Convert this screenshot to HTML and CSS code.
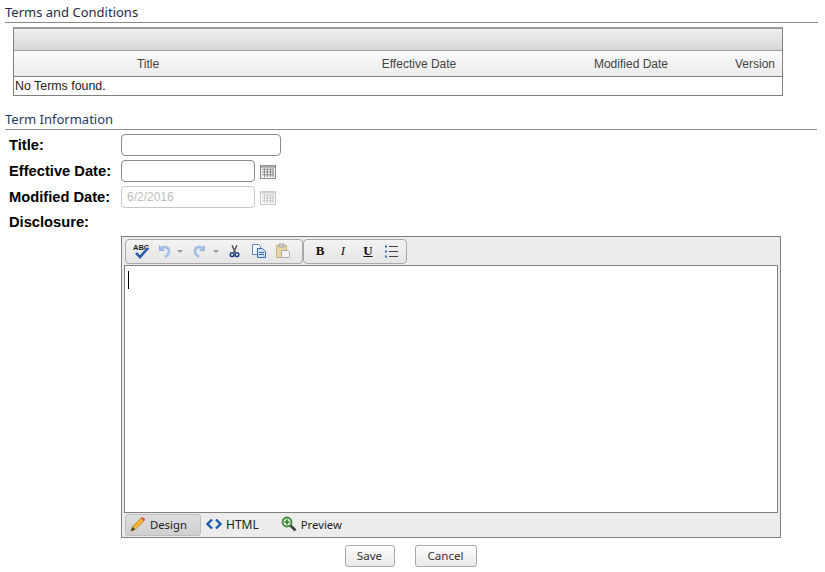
FILE: index.html
```html
<!DOCTYPE html>
<html lang="en">
<head>
<meta charset="utf-8">
<title>Terms and Conditions</title>
<link rel="stylesheet" href="styles.css">
</head>
<body>
<svg class="defs" width="0" height="0" aria-hidden="true">
  <symbol id="cal" viewBox="0 0 16 15" preserveAspectRatio="none">
    <rect x="0.5" y="0.5" width="15" height="14" fill="#f2f2f2" stroke="#8a8a8a"/>
    <rect x="1" y="1" width="14" height="2" fill="#a8a8a8"/>
    <path d="M2 4.500h12M2 7.500h12M2 10.500h12M4.500 4v9M7.500 4v9M10.500 4v9M13 4v9" stroke="#8c8c8c" fill="none"/>
  </symbol>
</svg>
<section class="section">
  <h2 class="heading">Terms and Conditions</h2>
  <div class="grid">
    <div class="grid-top"></div>
    <div class="grid-head">
      <span class="col-title">Title</span>
      <span class="col-eff">Effective Date</span>
      <span class="col-mod">Modified Date</span>
      <span class="col-ver">Version</span>
    </div>
    <div class="grid-empty">No Terms found.</div>
  </div>
</section>
<section class="section section-info">
  <h2 class="heading heading-info">Term Information</h2>
  <div class="form">
    <div class="row">
      <label class="label">Title:</label>
      <input class="input input-wide" type="text">
    </div>
    <div class="row">
      <label class="label">Effective Date:</label>
      <input class="input" type="text">
      <svg class="cal-icon"><use href="#cal"/></svg>
    </div>
    <div class="row">
      <label class="label">Modified Date:</label>
      <input class="input input-disabled" type="text" value="6/2/2016" disabled>
      <svg class="cal-icon cal-disabled"><use href="#cal"/></svg>
    </div>
    <div class="row row-disc">
      <label class="label">Disclosure:</label>
    </div>
  </div>
  <div class="editor">
    <div class="toolbar">
      <div class="tool-group group-a">
        <svg class="ti" viewBox="0 0 18 16"><text x="1" y="7" class="abc">ABC</text><path d="M4 10l4 4 8-9" fill="none" stroke="#2f5fa8" stroke-width="2.600"/></svg>
        <svg class="ti t-dim" viewBox="0 0 16 16"><path d="M3 2v6h6" fill="#8fb0dc"/><path d="M4 7c2-4 9-4 9 1 0 3-2 5-4 6" fill="none" stroke="#a3bfe4" stroke-width="2.600"/></svg>
        <span class="caret"></span>
        <svg class="ti t-dim t-redo" viewBox="0 0 16 16"><path d="M13 2v6H7" fill="#8fb0dc"/><path d="M12 7C10 3 3 3 3 8c0 3 2 5 4 6" fill="none" stroke="#a3bfe4" stroke-width="2.600"/></svg>
        <span class="caret"></span>
        <svg class="ti t-cut" viewBox="0 0 16 16"><path d="M5 1l4 9M11 1L7 10" stroke="#555" stroke-width="1.800" fill="none"/><circle cx="5" cy="12.500" r="2.300" fill="none" stroke="#24418f" stroke-width="1.800"/><circle cx="11" cy="12.500" r="2.300" fill="none" stroke="#24418f" stroke-width="1.800"/></svg>
        <svg class="ti t-copy" viewBox="0 0 16 16"><path d="M1.500 1.500h6l2 2v8h-8z" fill="#fff" stroke="#5b84c4"/><path d="M6.500 5.500h5l3 3v6h-8z" fill="#cfe0f5" stroke="#3a6cb5"/><path d="M8 9.500h5M8 11.500h5" stroke="#3a6cb5"/></svg>
        <svg class="ti t-paste" viewBox="0 0 16 16"><rect x="1.500" y="2.500" width="10" height="12" fill="#e9d6a8" stroke="#c9b27f"/><rect x="4" y="1" width="5" height="3" fill="#ccc" stroke="#aaa"/><path d="M6.500 7.500h6l2 2v5h-8z" fill="#f3f3f3" stroke="#aaa"/></svg>
      </div>
      <div class="tool-group group-b">
        <span class="fmt fmt-b">B</span>
        <span class="fmt fmt-i">I</span>
        <span class="fmt fmt-u">U</span>
        <svg class="ti t-list" viewBox="0 0 16 16"><path d="M6 3.500h9M6 8.500h9M6 13.500h9" stroke="#444" fill="none"/><path d="M2 2.500h2v2H2zM2 7.500h2v2H2zM2 12.500h2v2H2z" fill="#3a6cb5"/></svg>
      </div>
    </div>
    <div class="editor-body"><span class="cursor"></span></div>
    <div class="tabs">
      <div class="tab tab-active">
        <svg class="tab-icon" viewBox="0 0 16 16"><path d="M1 15l1.500-4L11 2l3 3-9 8.500z" fill="#f2b632" stroke="#b57f1c" stroke-width=".8"/><path d="M11 2l1.500-1.300 2.800 2.800L14 5z" fill="#d9534f"/><path d="M1 15l1.500-4 2.500 2.500z" fill="#333"/></svg>
        <span>Design</span>
      </div>
      <div class="tab tab-html">
        <svg class="tab-icon tab-icon-code" viewBox="0 0 16 12"><path d="M6 1.500L1.500 6 6 10.500" fill="none" stroke="#1f5da8" stroke-width="2.400"/><path d="M10 1.500L14.500 6 10 10.500" fill="none" stroke="#1f5da8" stroke-width="2.400"/></svg>
        <span>HTML</span>
      </div>
      <div class="tab tab-preview">
        <svg class="tab-icon" viewBox="0 0 16 16"><path d="M9 9l5.500 5.500" stroke="#444" stroke-width="2.600"/><circle cx="6" cy="6" r="4.500" fill="#d9efd0" stroke="#3c8c3a" stroke-width="1.800"/><path d="M3.500 6h5M6 3.500v5" stroke="#2f7d2d" stroke-width="1.600"/></svg>
        <span>Preview</span>
      </div>
    </div>
  </div>
  <div class="actions">
    <button class="btn btn-save" type="button">Save</button>
    <button class="btn btn-cancel" type="button">Cancel</button>
  </div>
</section>
</body>
</html>
```

FILE: styles.css
```css
* { box-sizing: border-box; }
html, body { margin: 0; padding: 0; background: #fff; }
body {
  width: 825px;
  height: 572px;
  overflow: hidden;
  font-family: "Liberation Sans", Arial, sans-serif;
  font-size: 12px;
  color: #111;
}
.defs { position: absolute; }
.section { padding-left: 5px; }
.heading {
  margin: 0 7px 0 0;
  height: 23px;
  padding-top: 4px;
  border-bottom: 1px solid #8a8a8a;
  font-family: "Noto Sans", sans-serif;
  font-weight: 400;
  font-size: 13px;
  line-height: 17px;
  color: #2a2a48;
}
.heading-info { margin-right: 8px; color: #1f3a66; }
.section-info { margin-top: 11px; }
.grid {
  margin: 4px 0 0 8px;
  width: 770px;
  height: 69px;
  border: 1px solid #808080;
  border-top-width: 2px;
  border-top-color: #999;
  display: flex;
  flex-direction: column;
}
.grid-top {
  height: 22px;
  flex: none;
  background: linear-gradient(#f0f0f0, #d6d6d6);
  border-bottom: 1px solid #a0a0a0;
}
.grid-head {
  height: 26px;
  flex: none;
  display: grid;
  grid-template-columns: 268px 274px 145px 81px;
  align-items: center;
  background: linear-gradient(#fafafa, #ececec);
  border-bottom: 1px solid #808080;
  color: #444;
  text-align: center;
}
.col-ver { text-align: right; padding-right: 7px; }
.col-mod { text-align: right; padding-right: 33px; }
.grid-empty {
  padding-left: 1px;
  line-height: 18px;
  font-size: 12.400px;
  color: #222;
}
.form {
  display: flex;
  flex-direction: column;
  padding-top: 4px;
  gap: 4px;
}
.row {
  height: 22px;
  display: flex;
  align-items: center;
}
.row-disc { height: 20px; }
.label {
  width: 116px;
  flex: none;
  padding-left: 4px;
  font-weight: 700;
  font-size: 14.700px;
  color: #000;
}
.input {
  width: 134px;
  height: 22px;
  margin: 0;
  padding: 0 5px;
  border: 1px solid #8a8a8a;
  border-radius: 4px;
  background: #fff;
  font-family: "Liberation Sans", Arial, sans-serif;
  font-size: 12px;
  outline: none;
}
.input-wide { width: 160px; }
.input-disabled {
  border-color: #c8c8c8;
  color: #bdbdbd;
  -webkit-text-fill-color: #bdbdbd;
  opacity: 1;
}
.cal-icon { width: 16px; height: 14px; margin: 2px 0 0 5px; }
.cal-disabled { opacity: .45; }
.editor {
  margin: 4px 0 0 116px;
  width: 660px;
  height: 302px;
  border: 1px solid #808080;
  background: #ececec;
  display: flex;
  flex-direction: column;
  padding: 0 2px;
}
.toolbar {
  height: 28px;
  flex: none;
  display: flex;
  align-items: center;
  padding: 0 0 0 1px;
}
.tool-group {
  height: 25px;
  display: flex;
  align-items: center;
  border: 1px solid #a8a8a8;
  border-radius: 4px;
  background: linear-gradient(#f3f3f3, #e6e6e6);
}
.group-a { width: 178px; padding-left: 6px; }
.group-b { width: 104px; padding-left: 8px; }
.ti { width: 18px; height: 16px; flex: none; }
.abc { font-family: "Liberation Sans", sans-serif; font-size: 7.500px; font-weight: 700; fill: #222; }
.t-dim { margin-left: 6px; width: 16px; }
.t-redo { margin-left: 5px; }
.caret {
  width: 0;
  height: 0;
  margin-left: 5px;
  margin-right: 4px;
  border-left: 3px solid transparent;
  border-right: 3px solid transparent;
  border-top: 3px solid #999;
}
.t-cut { margin-left: 5px; width: 13px; }
.t-copy { margin-left: 10px; width: 16px; }
.t-paste { margin-left: 8px; width: 16px; }
.fmt {
  width: 24px;
  text-align: center;
  font-family: "Liberation Serif", serif;
  font-size: 13px;
  color: #111;
  line-height: 16px;
  flex: none;
}
.fmt-b { font-weight: 700; width: 16px; }
.fmt-i { font-style: italic; font-weight: 400; width: 30px; }
.fmt-u { text-decoration: underline; font-weight: 700; width: 20px; }
.t-list { width: 16px; margin-left: 5px; }
.editor-body {
  height: 248px;
  flex: none;
  background: #fff;
  border: 1px solid #808080;
  padding: 5px 0 0 3px;
}
.cursor { display: block; width: 1px; height: 18px; background: #000; }
.tabs {
  flex: 1;
  display: flex;
  align-items: center;
  font-family: "Noto Sans", sans-serif;
  font-size: 11.300px;
  color: #222;
  padding-left: 1px;
}
.tab {
  height: 22px;
  display: flex;
  align-items: center;
  gap: 4px;
  border: 1px solid transparent;
  border-radius: 3px;
  padding-bottom: 2px;
}
.tab-active {
  width: 76px;
  padding-left: 4px;
  border-color: #bdbdbd;
  background: linear-gradient(#dedede, #cfcfcf);
}
.tab-html { margin-left: 4px; font-size: 12px; }
.tab-preview { margin-left: 20px; gap: 4px; }
.tab-icon { width: 16px; height: 16px; flex: none; }
.tab-icon-code { height: 12px; }
.actions {
  display: flex;
  justify-content: center;
  gap: 20px;
  margin: 7px 0 0 0;
  padding-right: 9px;
}
.btn {
  height: 22px;
  padding: 0 0 2px;
  border: 1px solid #a8a8a8;
  border-radius: 3px;
  background: linear-gradient(#fdfdfd, #e8e8e8);
  font-family: "Noto Sans", sans-serif;
  font-size: 11.600px;
  color: #333;
}
.btn-save { width: 50px; }
.btn-cancel { width: 62px; }
```
